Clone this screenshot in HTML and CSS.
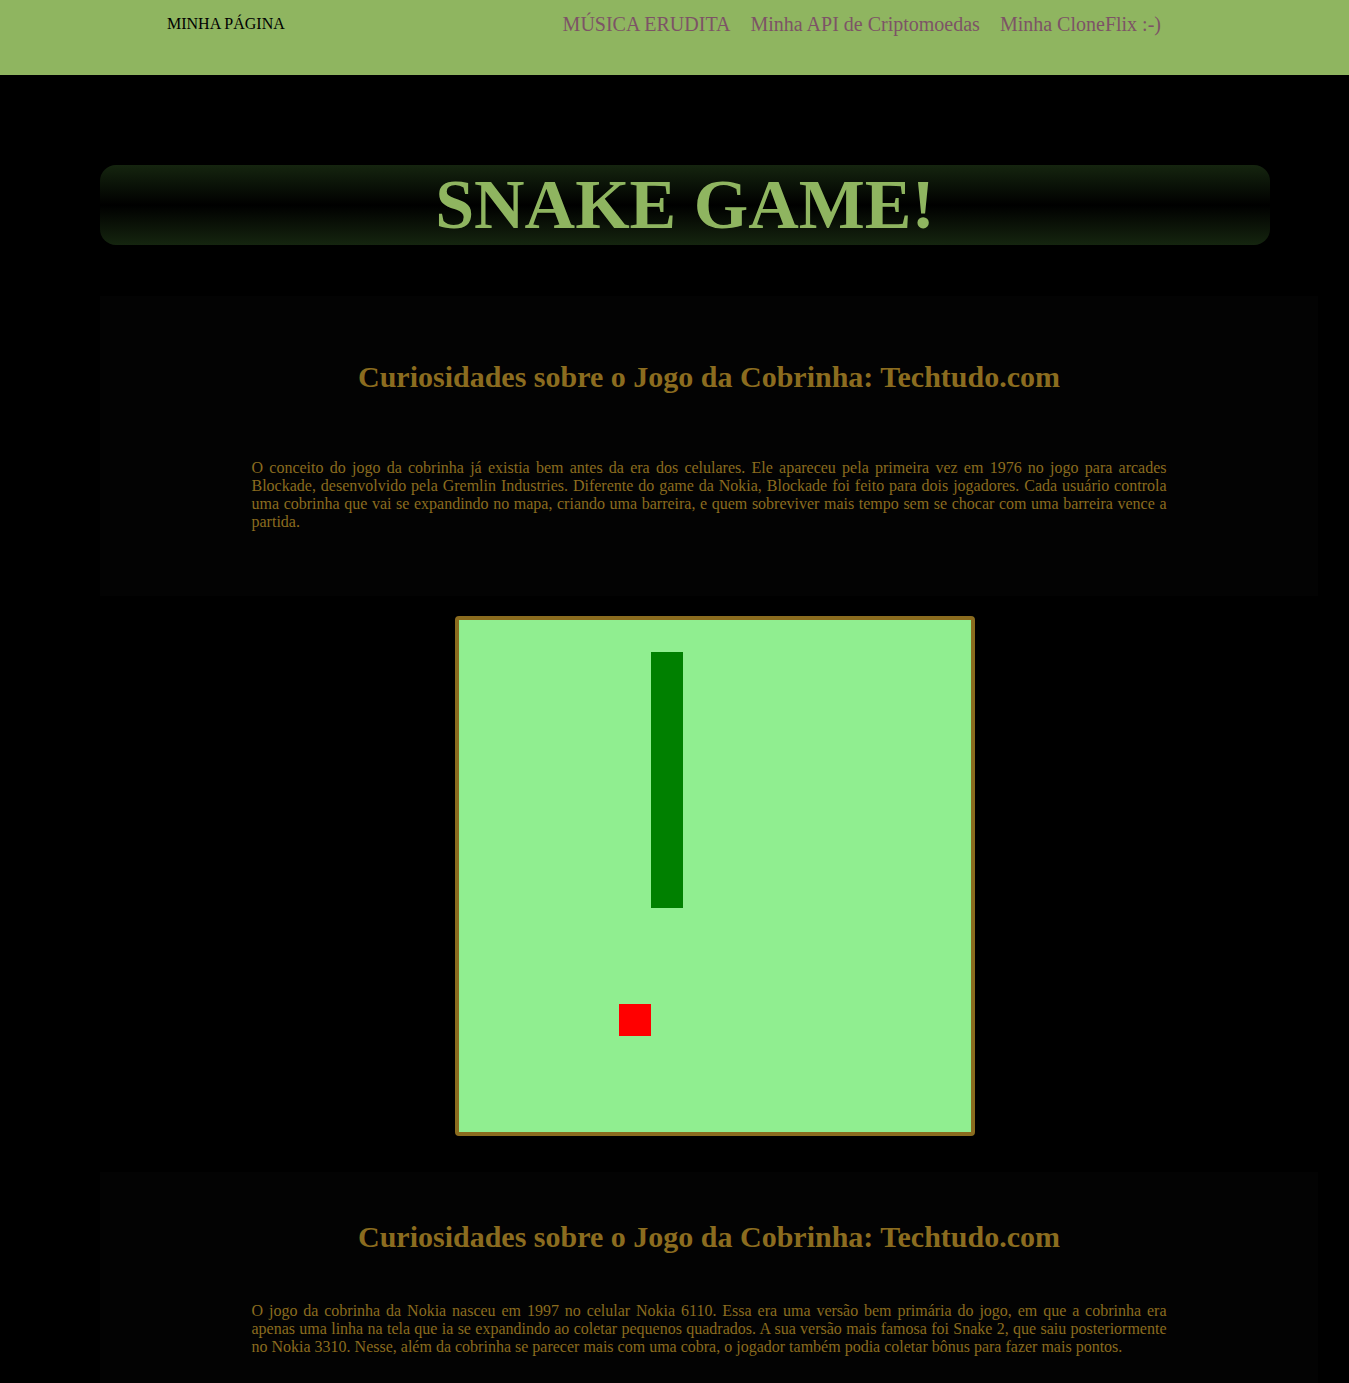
FILE: index.html
```html
<!DOCTYPE html>
<html lang="pt-BR">
<head>
<meta charset="utf-8">
<title>Snake Game</title>
<link rel="stylesheet" href="styles.css">
</head>
<body>
<header class="topbar">
  <div class="brand">MINHA PÁGINA</div>
  <nav class="nav">
    <a class="nav-link" href="#">MÚSICA ERUDITA</a>
    <a class="nav-link" href="#">Minha API de Criptomoedas</a>
    <a class="nav-link" href="#">Minha CloneFlix :-)</a>
  </nav>
</header>

<div class="title-box">
  <h1 class="title">SNAKE GAME!</h1>
</div>

<section class="info info-first">
  <h2 class="info-title">Curiosidades sobre o Jogo da Cobrinha: Techtudo.com</h2>
  <p class="info-text">O conceito do jogo da cobrinha já existia bem antes da era dos celulares. Ele apareceu pela primeira vez em 1976 no jogo para arcades Blockade, desenvolvido pela Gremlin Industries. Diferente do game da Nokia, Blockade foi feito para dois jogadores. Cada usuário controla uma cobrinha que vai se expandindo no mapa, criando uma barreira, e quem sobreviver mais tempo sem se chocar com uma barreira vence a partida.</p>
</section>

<div class="board-wrap">
  <div class="board">
    <div class="snake"></div>
    <div class="food"></div>
  </div>
</div>

<section class="info info-second">
  <h2 class="info-title">Curiosidades sobre o Jogo da Cobrinha: Techtudo.com</h2>
  <p class="info-text">O jogo da cobrinha da Nokia nasceu em 1997 no celular Nokia 6110. Essa era uma versão bem primária do jogo, em que a cobrinha era apenas uma linha na tela que ia se expandindo ao coletar pequenos quadrados. A sua versão mais famosa foi Snake 2, que saiu posteriormente no Nokia 3310. Nesse, além da cobrinha se parecer mais com uma cobra, o jogador também podia coletar bônus para fazer mais pontos.</p>
</section>
</body>
</html>
```

FILE: styles.css
```css
html, body {
  margin: 0;
  padding: 0;
  background: #000;
}

body {
  font-family: "Liberation Serif", "Times New Roman", serif;
  color: #8b6c1f;
}

.topbar {
  height: 75px;
  background: #8fb560;
  display: flex;
  justify-content: space-between;
  align-items: flex-start;
  padding: 0 188px 0 167px;
  box-sizing: border-box;
}

.brand {
  font-size: 16px;
  color: #000;
  padding-top: 15px;
  line-height: 18px;
}

.nav {
  display: flex;
  gap: 20px;
  padding-top: 13px;
}

.nav-link {
  font-size: 20px;
  line-height: 23px;
  color: #7d5366;
  text-decoration: none;
}

.title-box {
  margin: 90px 79px 0 100px;
  height: 80px;
  border-radius: 16px;
  background: linear-gradient(to bottom, #15250f 0%, #000 50%, #15250f 100%);
  display: flex;
  justify-content: center;
}

.title {
  margin: 0;
  font-size: 70px;
  line-height: 80px;
  font-weight: bold;
  color: #8fb560;
}

.info {
  margin: 0 31px 0 100px;
  background: #030303;
  box-sizing: border-box;
}

.info-first {
  margin-top: 51px;
  height: 300px;
  padding-top: 64px;
}

.info-second {
  margin-top: 36px;
  padding-top: 48px;
  padding-bottom: 40px;
}

.info-title {
  margin: 0;
  font-size: 30px;
  line-height: 34px;
  font-weight: bold;
  text-align: center;
  color: #8b6c1f;
}

.info-first .info-title {
  margin-bottom: 65px;
}

.info-second .info-title {
  margin-bottom: 48px;
}

.info-text {
  margin: 0 auto;
  width: 915px;
  font-size: 16px;
  line-height: 18px;
  text-align: justify;
  color: #8b6c1f;
}

.board-wrap {
  display: flex;
  justify-content: center;
  margin: 20px 19px 0 100px;
}

.board {
  width: 512px;
  height: 512px;
  border: 4px solid #8b6c1f;
  border-radius: 4px;
  background: #90ee90;
  display: grid;
  grid-template-columns: repeat(16, 32px);
  grid-template-rows: repeat(16, 32px);
}

.snake {
  grid-column: 7;
  grid-row: 2 / span 8;
  background: #008000;
}

.food {
  grid-column: 6;
  grid-row: 13;
  background: #ff0000;
}
```
